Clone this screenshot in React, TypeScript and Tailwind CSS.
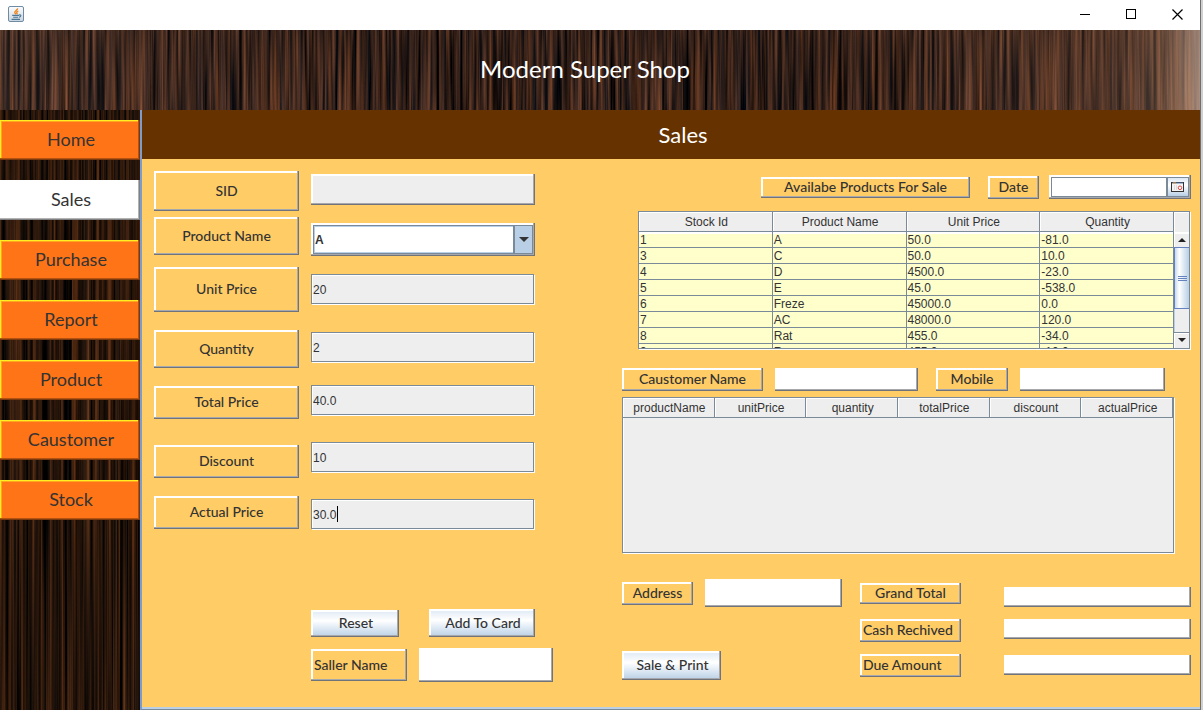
import type { ReactNode } from "react";

const FACE = "font-['Tempus_Sans_ITC','Lato',sans-serif]";
const RAISED =
  "shadow-[inset_-1px_-1px_#70747a,inset_-2px_-2px_#a6a8ab,inset_2px_2px_#fff]";
const SUNKEN =
  "border border-[#7a8a99] shadow-[inset_1px_1px_#fff,1px_1px_#fff]";

function Wood({ id, freq, seed, dark, children }: { id: string; freq: string; seed: number; dark?: boolean; children?: ReactNode }) {
  return (
    <svg className="absolute inset-0 h-full w-full" aria-hidden="true">
      <defs>
        <filter id={id} x="0" y="0" width="100%" height="100%" colorInterpolationFilters="sRGB">
          <feTurbulence type="fractalNoise" baseFrequency={freq} numOctaves={3} seed={seed} />
          <feColorMatrix
            type="matrix"
            values={
              dark
                ? "0.65 0.2 0 0 -0.28  0.32 0.14 0 0 -0.15  0.12 0.1 0 0 -0.07  0 0 0 0 1"
                : "0.75 0.25 0 0 -0.3  0.4 0.2 0 0 -0.175  0.2 0.2 0 0 -0.105  0 0 0 0 1"
            }
          />
        </filter>
      </defs>
      <rect width="100%" height="100%" filter={`url(#${id})`} />
      {children}
    </svg>
  );
}

function JavaIcon() {
  return (
    <svg width="16" height="16" viewBox="0 0 16 16" aria-hidden="true">
      <defs>
        <linearGradient id="java-bg" x1="0" y1="0" x2="0" y2="1">
          <stop offset="0" stopColor="#fdfdfd" />
          <stop offset="1" stopColor="#c9d4de" />
        </linearGradient>
      </defs>
      <rect x="0.5" y="0.5" width="15" height="15" rx="1.5" fill="url(#java-bg)" stroke="#6f8ba3" />
      <path d="M9.6 2.4C9.8 4.2 6.2 4.8 6.8 6.6C7 7.3 7.6 7.6 7.8 8.2M10.4 5C8.8 5.6 8.4 6.2 9 7.2C9.2 7.6 9 8 8.7 8.3" fill="none" stroke="#ee7d12" strokeWidth="1.3" />
      <path d="M4.2 9.4H11M5.2 11.2H10.2M11 9C13.6 8.4 13.4 10.8 11 11.2M3.6 13.4H12" fill="none" stroke="#4c7696" strokeWidth="1.1" />
    </svg>
  );
}

function TitleBar() {
  return (
    <div className="flex h-[30px] items-center justify-between bg-white pb-0.5 pl-2">
      <JavaIcon />
      <div className="flex h-full">
        <button aria-label="Minimize" className="flex w-[46px] items-center justify-center">
          <svg width="10" height="11" aria-hidden="true"><path d="M0 5.5H10" stroke="#000" /></svg>
        </button>
        <button aria-label="Maximize" className="flex w-[46px] items-center justify-center">
          <svg width="10" height="10" aria-hidden="true"><rect x="0.5" y="0.5" width="9" height="9" fill="none" stroke="#000" /></svg>
        </button>
        <button aria-label="Close" className="flex w-[46px] items-center justify-center">
          <svg width="11" height="11" aria-hidden="true"><path d="M0.5 0.5L10.5 10.5M10.5 0.5L0.5 10.5" stroke="#000" strokeWidth="1.2" /></svg>
        </button>
      </div>
    </div>
  );
}

const NAV = ["Home", "Sales", "Purchase", "Report", "Product", "Caustomer", "Stock"];

function Sidebar() {
  return (
    <nav className="relative w-[140px] shrink-0 overflow-hidden bg-[#1e110a]">
      <Wood id="wood-side" freq="0.34 0.002" seed={11} dark />
      <div className="relative flex flex-col gap-5 pt-[10px]">
        {NAV.map((name) => (
          <button
            key={name}
            className={
              name === "Sales"
                ? `h-10 bg-white pb-0.5 pl-0.5 text-lg text-[#333] shadow-[inset_-1px_-1px_#808080,inset_-2px_-2px_#b2b2b2] ${FACE}`
                : `h-10 bg-[#ff7417] pb-0.5 pl-0.5 text-lg text-[#333] shadow-[inset_-1px_-1px_#7d380b,inset_-2px_-2px_#b25110,inset_1px_1px_#ffee20,inset_2px_2px_#ffa520] ${FACE}`
            }
          >
            {name}
          </button>
        ))}
      </div>
    </nav>
  );
}

function Tag({ htmlFor, className, children }: { htmlFor?: string; className: string; children: ReactNode }) {
  return (
    <label
      htmlFor={htmlFor}
      className={`flex shrink-0 items-center whitespace-nowrap pb-px text-sm leading-5 font-medium text-[#333] ${FACE} ${RAISED} ${className}`}
    >
      {children}
    </label>
  );
}

function Entry({ id, className }: { id: string; className: string }) {
  return <input id={id} className={`min-w-0 bg-white px-1 text-xs text-[#333] outline-none ${RAISED} ${className}`} />;
}

function Push({ className, children }: { className: string; children: ReactNode }) {
  return (
    <button
      className={`whitespace-nowrap bg-linear-to-b from-[#dde8f3] via-white via-40% to-[#b8cfe5] pb-px pl-0.5 text-sm leading-5 font-medium text-[#333] ${FACE} ${RAISED} ${className}`}
    >
      {children}
    </button>
  );
}

const FIELD = `h-[30px] mb-px w-[223px] bg-[#eee] px-px pt-px text-xs text-[#333] outline-none ${SUNKEN}`;

function SaleForm() {
  return (
    <section className="w-[399px] shrink-0 pt-3">
      <div className="flex gap-3">
        <div className="flex w-[145px] flex-col">
          <Tag htmlFor="sid" className="h-10 justify-center">SID</Tag>
          <Tag htmlFor="product" className="mt-[6px] h-[38px] justify-center">Product Name</Tag>
          <Tag htmlFor="unit" className="mt-3 h-[45px] justify-center">Unit Price</Tag>
          <Tag htmlFor="qty" className="mt-[18px] h-[38px] justify-center">Quantity</Tag>
          <Tag htmlFor="total" className="mt-[18px] h-[33px] justify-center">Total Price</Tag>
          <Tag htmlFor="discount" className="mt-[26px] h-[33px] justify-center">Discount</Tag>
          <Tag htmlFor="actual" className="mt-[18px] h-[33px] justify-center">Actual Price</Tag>
        </div>
        <div className="flex w-[224px] flex-col pt-[3px]">
          <input id="sid" readOnly className={`h-[31px] bg-[#eee] px-1 text-xs outline-none ${RAISED}`} />
          <div className={`relative mt-[18px] h-[33px] bg-[#b8cfe5] p-[2px] ${RAISED}`}>
            <select
              id="product"
              className="h-full w-full appearance-none border border-[#7a8a99] bg-white pl-px text-xs font-bold text-[#333] shadow-[inset_1px_1px_#b8cfe5,inset_-1px_-1px_#b8cfe5] outline-none"
            >
              <option>A</option>
              <option>C</option>
              <option>D</option>
              <option>E</option>
            </select>
            <span className="pointer-events-none absolute top-[2px] right-[2px] bottom-[2px] flex w-5 items-center justify-center border border-l-2 border-[#7a8a99] bg-[#b8cfe5]">
              <svg width="10" height="5" aria-hidden="true"><path d="M0 0H10L5 5Z" fill="#333" /></svg>
            </span>
          </div>
          <input id="unit" defaultValue="20" className={`mt-[18px] ${FIELD}`} />
          <input id="qty" defaultValue="2" className={`mt-[27px] ${FIELD}`} />
          <input id="total" defaultValue="40.0" className={`mt-[22px] ${FIELD}`} />
          <input id="discount" defaultValue="10" className={`mt-[26px] ${FIELD}`} />
          <div className="relative mt-[26px]">
            <input id="actual" defaultValue="30.0" className={`block ${FIELD}`} />
            <span className="absolute top-[7px] left-[26px] h-4 w-px bg-black" />
          </div>
        </div>
      </div>
      <div className="mt-[79px] flex flex-col gap-[11px] pl-[157px]">
        <div className="flex items-end gap-[30px]">
          <Push className="h-[27px] w-[88px]">Reset</Push>
          <Push className="h-[28px] w-[106px]">Add To Card</Push>
        </div>
        <div className="flex items-center gap-3">
          <Tag htmlFor="seller" className="h-8 w-24 pl-[3px]">Saller Name</Tag>
          <Entry id="seller" className="h-[34px] w-[134px]" />
        </div>
      </div>
    </section>
  );
}

const STOCK = [
  ["1", "A", "50.0", "-81.0"],
  ["3", "C", "50.0", "10.0"],
  ["4", "D", "4500.0", "-23.0"],
  ["5", "E", "45.0", "-538.0"],
  ["6", "Freze", "45000.0", "0.0"],
  ["7", "AC", "48000.0", "120.0"],
  ["8", "Rat", "455.0", "-34.0"],
  ["9", "R", "455.0", "-10.0"],
];

const HEAD_CELL =
  "h-5 border-r border-b border-[#7a8a99] bg-[#eee] p-0 pt-0.5 pl-0.5 text-center leading-[17px] font-normal shadow-[inset_1px_1px_#fff]";

function StockTable() {
  return (
    <div className={`mr-px mt-3 ml-4 flex h-[138px] overflow-hidden bg-[#eee] text-xs text-[#333] ${SUNKEN}`}>
      <div className="min-w-0 flex-1 overflow-hidden">
        <table className="w-full table-fixed border-separate border-spacing-0">
          <thead>
            <tr>
              {["Stock Id", "Product Name", "Unit Price", "Quantity"].map((h) => (
                <th key={h} className={HEAD_CELL}>{h}</th>
              ))}
            </tr>
          </thead>
          <tbody className="[&>tr:first-child>td]:shadow-[inset_0_2px_#fff]">
            {STOCK.map((row) => (
              <tr key={row[0]}>
                {row.map((cell, i) => (
                  <td key={i} className="h-4 border-r border-b border-[#7a8a99] bg-[#ffffcc] p-0 pt-px pl-px leading-[14px]">
                    {cell}
                  </td>
                ))}
              </tr>
            ))}
          </tbody>
        </table>
      </div>
      <div className="flex w-[15px] flex-col">
        <div className="h-5 shadow-[inset_1px_1px_#fff]" />
        <div className="flex flex-1 flex-col bg-[#eee]">
          <button aria-label="Scroll up" className="flex h-[15px] items-center justify-center border-t-2 border-l border-white pb-0.5">
            <svg width="8" height="4" aria-hidden="true"><path d="M4 0L8 4H0Z" fill="#222" /></svg>
          </button>
          <div className="flex h-[62px] flex-col items-center justify-center gap-px border-y border-l border-[#6382bf] bg-linear-to-r from-[#c8d9ea] via-white via-30% to-[#b8cfe5]">
            <span className="h-px w-[9px] bg-[#6382bf]" />
            <span className="h-px w-[9px] bg-[#6382bf]" />
            <span className="h-px w-[9px] bg-[#6382bf]" />
          </div>
          <div className="flex-1 border-l border-[#b8cfe5]" />
          <button aria-label="Scroll down" className="flex h-4 items-center justify-center border-t border-[#7a8a99] pb-0.5 shadow-[inset_1px_1px_#fff]">
            <svg width="8" height="4" aria-hidden="true"><path d="M0 0H8L4 4Z" fill="#222" /></svg>
          </button>
        </div>
      </div>
    </div>
  );
}

function CartTable() {
  return (
    <div className={`mt-[6px] mr-[17px] h-[156px] bg-[#eee] text-xs text-[#333] ${SUNKEN}`}>
      <table className="w-full table-fixed border-separate border-spacing-0">
        <thead>
          <tr>
            {["productName", "unitPrice", "quantity", "totalPrice", "discount", "actualPrice"].map((h) => (
              <th key={h} className={HEAD_CELL}>{h}</th>
            ))}
          </tr>
        </thead>
      </table>
    </div>
  );
}

function CalendarIcon() {
  return (
    <svg width="14" height="12" viewBox="0 0 14 12" aria-hidden="true">
      <rect x="0.5" y="1.5" width="12" height="9" fill="#f6f4f2" stroke="#333" />
      <path d="M1 2H12" stroke="#5577aa" />
      <path d="M2 2H5" stroke="#e8a33c" />
      <path d="M3.5 4V9M5.5 4V9" stroke="#ddd" />
      <circle cx="9" cy="6.8" r="1.8" fill="#fff" stroke="#e04848" />
    </svg>
  );
}

function Checkout() {
  return (
    <section className="min-w-0 flex-1 pt-4">
      <div className="flex items-center justify-end">
        <Tag className="h-[21px] w-[209px] justify-center">Availabe Products For Sale</Tag>
        <Tag htmlFor="date" className="ml-[18px] h-[23px] w-[51px] justify-center">Date</Tag>
        <div className={`ml-[10px] flex h-6 w-[142px] bg-white p-[2px] ${RAISED}`}>
          <input id="date" className="min-w-0 flex-1 border border-[#7a8a99] bg-white px-1 text-xs outline-none" />
          <button
            aria-label="Pick date"
            className="flex w-[22px] items-center justify-center border border-[#7a8a99] bg-linear-to-b from-[#dde8f3] via-white via-40% to-[#b8cfe5]"
          >
            <CalendarIcon />
          </button>
        </div>
      </div>
      <StockTable />
      <div className="mt-[19px] flex">
        <Tag htmlFor="customer" className="h-[23px] w-[141px] justify-center">Caustomer Name</Tag>
        <Entry id="customer" className="ml-3 h-[23px] w-[143px]" />
        <Tag htmlFor="mobile" className="ml-[18px] h-[23px] w-[72px] justify-center">Mobile</Tag>
        <Entry id="mobile" className="ml-3 h-[23px] w-[145px]" />
      </div>
      <CartTable />
      <div className="mt-[26px] flex justify-between">
        <div className="flex flex-col items-start gap-11">
          <div className="flex items-center gap-3">
            <Tag htmlFor="address" className="h-[23px] w-[71px] justify-center">Address</Tag>
            <Entry id="address" className="h-[28px] w-[137px]" />
          </div>
          <Push className="h-[29px] w-[99px]">Sale &amp; Print</Push>
        </div>
        <div className="flex gap-[43px]">
          <div className="flex w-[101px] flex-col pt-1">
            <Tag htmlFor="grand" className="h-[21px] justify-center">Grand Total</Tag>
            <Tag htmlFor="cash" className="mt-[15px] h-[23px] pl-[3px]">Cash Rechived</Tag>
            <Tag htmlFor="due" className="mt-3 h-[23px] pl-[3px]">Due Amount</Tag>
          </div>
          <div className="flex w-[187px] flex-col pt-2">
            <Entry id="grand" className="h-5" />
            <Entry id="cash" className="mt-3 h-5" />
            <Entry id="due" className="mt-4 h-5" />
          </div>
        </div>
      </div>
    </section>
  );
}

export default function App() {
  return (
    <div className="flex min-h-screen bg-[#d5d5d5] font-['Liberation_Sans',Arial,sans-serif]">
      <div className="flex min-w-0 flex-1 flex-col">
        <TitleBar />
        <header className="relative flex h-20 items-center justify-center overflow-hidden bg-[#2a1a12]">
          <Wood id="wood-top" freq="0.28 0.006" seed={4}>
            <defs>
              <linearGradient id="glow-right">
                <stop offset="0.65" stopColor="#a06040" stopOpacity="0" />
                <stop offset="0.93" stopColor="#b07858" stopOpacity="0.25" />
                <stop offset="0.97" stopColor="#c89878" stopOpacity="0.35" />
                <stop offset="1" stopColor="#e8c8b4" stopOpacity="0.6" />
              </linearGradient>
              <linearGradient id="glow-left">
                <stop offset="0" stopColor="#b08068" stopOpacity="0.15" />
                <stop offset="0.3" stopColor="#a06040" stopOpacity="0" />
              </linearGradient>
            </defs>
            <rect width="100%" height="100%" fill="url(#glow-right)" />
            <rect width="100%" height="100%" fill="url(#glow-left)" />
          </Wood>
          <h1 className={`relative pr-[30px] pb-0.5 text-2xl text-white ${FACE}`}>Modern Super Shop</h1>
        </header>
        <div className="flex flex-1">
          <Sidebar />
          <main className="flex min-w-0 flex-1 flex-col border-b border-l-2 border-b-[#7a8a99] border-l-[#7f9bc8] bg-[#ffcc66]">
            <h2 className={`flex h-[49px] items-center justify-center bg-[#663300] pb-px pl-6 text-[22px] text-white ${FACE}`}>
              Sales
            </h2>
            <div className="flex flex-1 justify-between gap-[69px] border-b-2 border-[#b8cfe5] pr-[9px] pl-3">
              <SaleForm />
              <Checkout />
            </div>
          </main>
        </div>
      </div>
      <div className="w-[3px] shrink-0 border-l border-[#6f6f6f] bg-[#d0d0d0]" />
    </div>
  );
}
